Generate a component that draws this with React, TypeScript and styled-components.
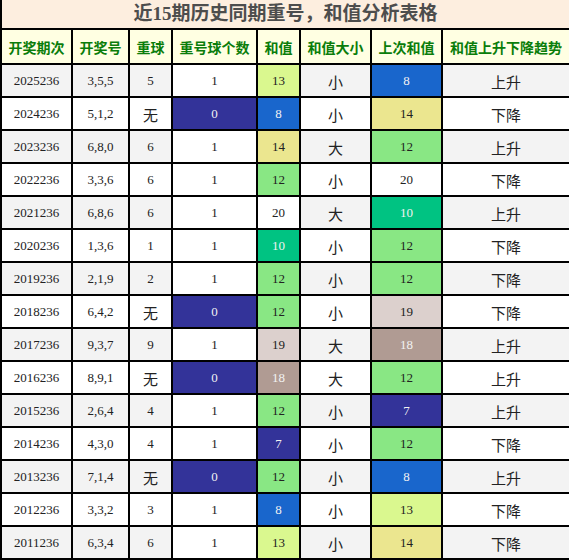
import { createGlobalStyle } from "styled-components";
import styled from "styled-components";

const GlobalStyle = createGlobalStyle`
  html, body {
    margin: 0;
    padding: 0;
    background: #ffffff;
  }
`;

const Table = styled.table`
  width: 569px;
  border-collapse: collapse;
  table-layout: fixed;
  font-family: "Liberation Serif", "Noto Sans CJK SC", serif;
`;

const TitleCell = styled.th`
  height: 28px;
  padding: 0;
  line-height: 24px;
  background: #fdeedf;
  color: #4d4d4d;
  font-size: 19px;
  font-weight: bold;
  font-family: "Liberation Serif", "Noto Sans CJK SC", serif;
  border: 2px solid #000;
  border-top: none;
`;

const HeadCell = styled.th`
  height: 33px;
  padding: 0;
  line-height: 20px;
  background: #ffffe2;
  color: #0a7d0a;
  font-size: 14px;
  font-weight: bold;
  font-family: "Noto Sans CJK SC", sans-serif;
  border: 2px solid #000;
`;

const Cell = styled.td<{ $bg: string; $light?: boolean; $cjk?: boolean }>`
  height: ${(p) => (p.$cjk ? "28px" : "31px")};
  padding: ${(p) => (p.$cjk ? "3px 0 0" : "0")};
  line-height: 18px;
  text-align: center;
  background: ${(p) => p.$bg};
  color: ${(p) => (p.$light ? "#f2f2f2" : "#222")};
  font-size: ${(p) => (p.$cjk ? "15px" : "13px")};
  font-family: ${(p) =>
    p.$cjk ? '"Noto Sans CJK SC", sans-serif' : '"Liberation Serif", serif'};
  border: 2px solid #000;
`;

const widths = [71, 57, 43, 85, 43, 71, 71, 128];
const heads = ["开奖期次", "开奖号", "重球", "重号球个数", "和值", "和值大小", "上次和值", "和值上升下降趋势"];

const sumColors: Record<number, [string, boolean]> = {
  7: ["#333399", true],
  8: ["#1966cc", true],
  10: ["#00c382", true],
  12: ["#89e784", false],
  13: ["#daf88f", false],
  14: ["#ebe68f", false],
  18: ["#b09b93", true],
  19: ["#dcd0cd", false],
  20: ["#ffffff", false],
};

type Row = [string, string, string, number, number, string, number, string];

const rows: Row[] = [
  ["2025236", "3,5,5", "5", 1, 13, "小", 8, "上升"],
  ["2024236", "5,1,2", "无", 0, 8, "小", 14, "下降"],
  ["2023236", "6,8,0", "6", 1, 14, "大", 12, "上升"],
  ["2022236", "3,3,6", "6", 1, 12, "小", 20, "下降"],
  ["2021236", "6,8,6", "6", 1, 20, "大", 10, "上升"],
  ["2020236", "1,3,6", "1", 1, 10, "小", 12, "下降"],
  ["2019236", "2,1,9", "2", 1, 12, "小", 12, "下降"],
  ["2018236", "6,4,2", "无", 0, 12, "小", 19, "下降"],
  ["2017236", "9,3,7", "9", 1, 19, "大", 18, "上升"],
  ["2016236", "8,9,1", "无", 0, 18, "大", 12, "上升"],
  ["2015236", "2,6,4", "4", 1, 12, "小", 7, "上升"],
  ["2014236", "4,3,0", "4", 1, 7, "小", 12, "下降"],
  ["2013236", "7,1,4", "无", 0, 12, "小", 8, "上升"],
  ["2012236", "3,3,2", "3", 1, 8, "小", 13, "下降"],
  ["2011236", "6,3,4", "6", 1, 13, "小", 14, "下降"],
];

export default function App() {
  return (
    <>
      <GlobalStyle />
      <Table>
        <colgroup>
          {widths.map((w, i) => (
            <col key={i} style={{ width: w }} />
          ))}
        </colgroup>
        <thead>
          <tr>
            <TitleCell colSpan={8}>近15期历史同期重号，和值分析表格</TitleCell>
          </tr>
          <tr>
            {heads.map((h) => (
              <HeadCell key={h}>{h}</HeadCell>
            ))}
          </tr>
        </thead>
        <tbody>
          {rows.map((r, idx) => {
            const zebra = idx % 2 === 0 ? "#f3f3f3" : "#ffffff";
            const [sumBg, sumLight] = sumColors[r[4]];
            const [prevBg, prevLight] = sumColors[r[6]];
            return (
              <tr key={r[0]}>
                <Cell $bg={zebra}>{r[0]}</Cell>
                <Cell $bg={zebra}>{r[1]}</Cell>
                <Cell $bg={zebra} $cjk={r[2] === "无"}>
                  {r[2]}
                </Cell>
                <Cell $bg={r[3] === 0 ? "#333399" : "#ffffff"} $light={r[3] === 0}>
                  {r[3]}
                </Cell>
                <Cell $bg={sumBg} $light={sumLight}>
                  {r[4]}
                </Cell>
                <Cell $bg={zebra} $cjk>
                  {r[5]}
                </Cell>
                <Cell $bg={prevBg} $light={prevLight}>
                  {r[6]}
                </Cell>
                <Cell $bg={zebra} $cjk>
                  {r[7]}
                </Cell>
              </tr>
            );
          })}
        </tbody>
      </Table>
    </>
  );
}
